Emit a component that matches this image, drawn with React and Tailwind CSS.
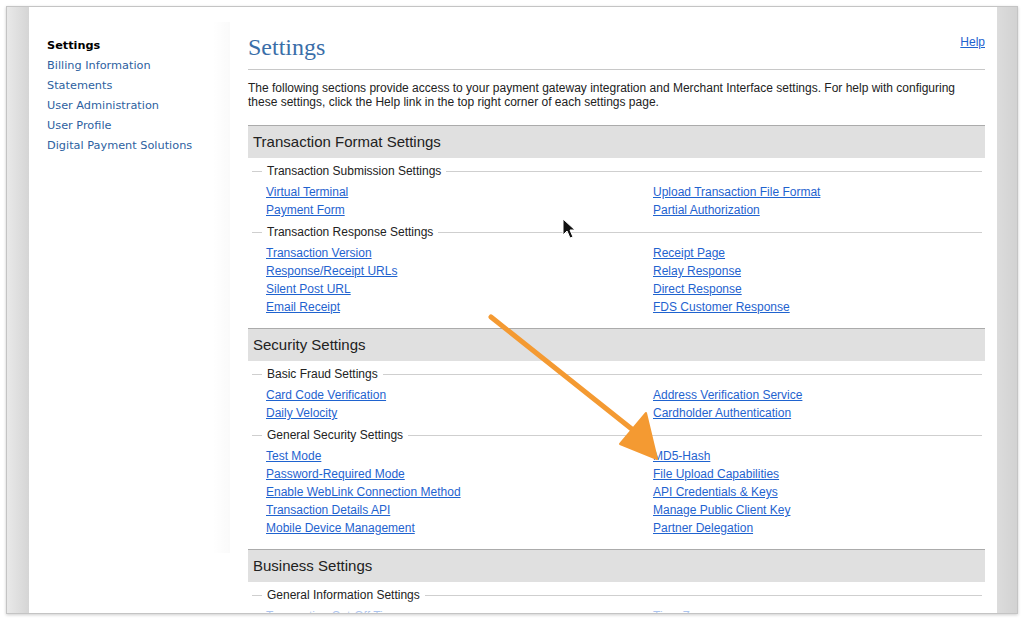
import React from 'react';

const sidebarItems = [
  'Billing Information',
  'Statements',
  'User Administration',
  'User Profile',
  'Digital Payment Solutions',
];

const sections = [
  {
    title: 'Transaction Format Settings',
    groups: [
      {
        legend: 'Transaction Submission Settings',
        left: ['Virtual Terminal', 'Payment Form'],
        right: ['Upload Transaction File Format', 'Partial Authorization'],
      },
      {
        legend: 'Transaction Response Settings',
        left: ['Transaction Version', 'Response/Receipt URLs', 'Silent Post URL', 'Email Receipt'],
        right: ['Receipt Page', 'Relay Response', 'Direct Response', 'FDS Customer Response'],
      },
    ],
  },
  {
    title: 'Security Settings',
    groups: [
      {
        legend: 'Basic Fraud Settings',
        left: ['Card Code Verification', 'Daily Velocity'],
        right: ['Address Verification Service', 'Cardholder Authentication'],
      },
      {
        legend: 'General Security Settings',
        left: [
          'Test Mode',
          'Password-Required Mode',
          'Enable WebLink Connection Method',
          'Transaction Details API',
          'Mobile Device Management',
        ],
        right: [
          'MD5-Hash',
          'File Upload Capabilities',
          'API Credentials & Keys',
          'Manage Public Client Key',
          'Partner Delegation',
        ],
      },
    ],
  },
  {
    title: 'Business Settings',
    groups: [
      {
        legend: 'General Information Settings',
        left: ['Transaction Cut-Off Time'],
        right: ['Time Zone'],
      },
    ],
  },
];

// link style shared by every settings link
const linkCls = 'block w-fit text-[12px] leading-[18px] text-[#1f63cf] underline underline-offset-[1px]';

const Legend = ({ text }) => (
  <div className="mt-[6px] flex items-center text-[12px] leading-[14px] text-[#222]">
    <div className="ml-[4px] h-px w-[10px] bg-[#cfcfcf]" />
    <span className="mx-[5px]">{text}</span>
    <div className="mr-[3px] h-px flex-1 bg-[#cfcfcf]" />
  </div>
);

const Section = ({ section, first }) => (
  <div className={first ? 'mt-[16px]' : 'mt-[12px]'}>
    <div className="flex h-[33px] items-center border-t border-[#ababab] bg-[#e0e0e0] pl-[5px] text-[15px] text-[#222]">
      {section.title}
    </div>
    {section.groups.map((g) => (
      <div key={g.legend}>
        <Legend text={g.legend} />
        <div className="mt-[5px] grid grid-cols-[387px_1fr] pl-[18px]">
          <div>
            {g.left.map((l) => (
              <a key={l} href="#" className={linkCls}>{l}</a>
            ))}
          </div>
          <div>
            {g.right.map((l) => (
              <a key={l} href="#" className={linkCls}>{l}</a>
            ))}
          </div>
        </div>
      </div>
    ))}
  </div>
);

export default function App() {
  return (
    <div className="h-[620px] w-[1024px] bg-white p-[6px] font-['Liberation_Sans',Arial,sans-serif]">
      <div className="relative flex h-full overflow-hidden border border-[#c4c4c4] bg-white shadow-[0_1px_3px_rgba(0,0,0,0.2)]">
        {/* left window chrome */}
        <div className="w-[22px] shrink-0 bg-gradient-to-r from-[#e9e9e9] to-[#d5d5d5]" />

        {/* Sidebar */}
        <aside className="relative w-[201px] shrink-0 pl-[18px] pt-[29px] font-['DejaVu_Sans',Verdana,sans-serif] text-[11.3px] leading-[20px]">
          <div className="absolute bottom-[60px] right-0 top-[15px] w-[18px] bg-gradient-to-r from-transparent to-black/[0.02]" />
          <div className="font-bold text-black">Settings</div>
          {sidebarItems.map((item) => (
            <a key={item} href="#" className="block text-[#2d5f9f]">{item}</a>
          ))}
        </aside>

        {/* Main content */}
        <main className="min-w-0 flex-1 pl-[18px] pr-[12px] pt-[26px]">
          <div className="flex items-start justify-between border-b border-[#c8c8c8] pb-[8px]">
            <h1 className="font-['Liberation_Serif','Times_New_Roman',serif] text-[24px] leading-[28px] text-[#3a6ea8]">
              Settings
            </h1>
            <a href="#" className="mt-[2px] text-[12px] leading-[14px] text-[#1f63cf] underline">Help</a>
          </div>
          <p className="mt-[11px] text-[12px] leading-[14px] text-[#222]">
            The following sections provide access to your payment gateway integration and Merchant Interface settings. For help with configuring
            these settings, click the Help link in the top right corner of each settings page.
          </p>
          {sections.map((s, i) => (
            <Section key={s.title} section={s} first={i === 0} />
          ))}
        </main>

        {/* right window chrome */}
        <div className="w-[20px] shrink-0 bg-gradient-to-r from-[#dcdcdc] to-[#d2d2d2]" />

        {/* bottom fade */}
        <div className="pointer-events-none absolute bottom-0 left-[22px] right-[20px] h-[14px] bg-gradient-to-b from-white/0 to-white/70" />

        {/* annotation arrow + cursor */}
        <svg className="pointer-events-none absolute left-[-7px] top-[-7px]" width="1024" height="620" viewBox="0 0 1024 620">
          <line x1="491" y1="317" x2="633" y2="430" stroke="#f49a32" strokeWidth="5" strokeLinecap="round" />
          <polygon points="620,444 646,413 657,459" fill="#f49a32" stroke="#f49a32" strokeWidth="2" strokeLinejoin="round" />
          <path d="M563 219 L563 235 L567 231 L570 238 L573 237 L570 230 L575 230 Z" fill="#111" stroke="#fff" strokeWidth="1" strokeLinejoin="round" />
        </svg>
      </div>
    </div>
  );
}
